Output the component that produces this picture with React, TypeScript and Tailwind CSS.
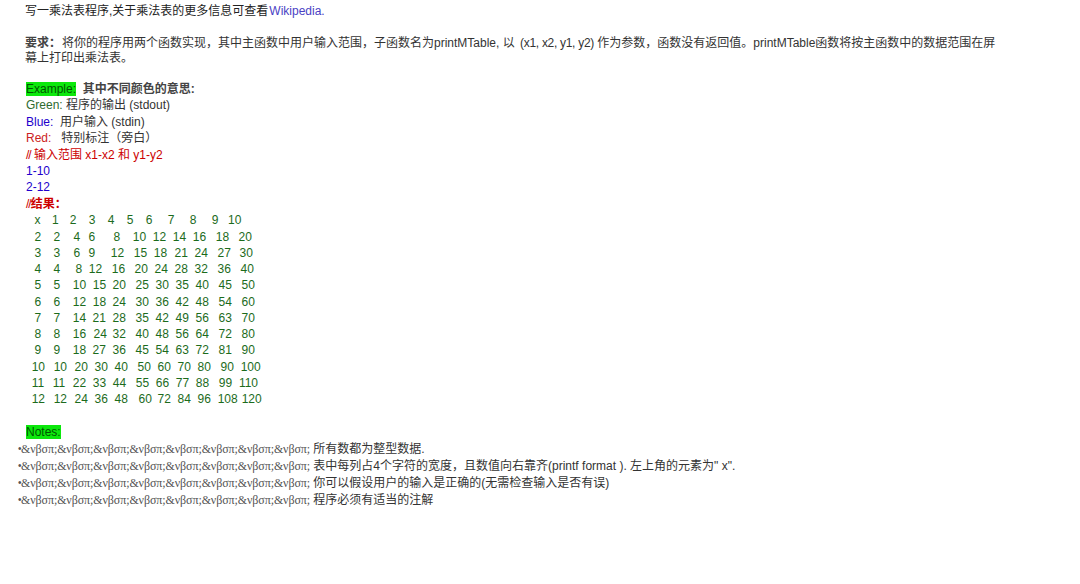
import React from "react"

const sans = "font-['Liberation_Sans','Noto_Sans_CJK_SC',sans-serif]"
const DIGIT = 6.674

// token, left edge of the glyph in px (the table in the page is only aligned with spaces)
const table: [string, number][][] = [
  [["x", 35], ["1", 54], ["2", 71], ["3", 90], ["4", 109], ["5", 128], ["6", 147], ["7", 169], ["8", 191], ["9", 213], ["10", 230]],
  [["2", 35], ["2", 54], ["4", 74], ["6", 89], ["8", 114], ["10", 134], ["12", 154], ["14", 174], ["16", 194], ["18", 217], ["20", 239]],
  [["3", 35], ["3", 54], ["6", 74], ["9", 89], ["12", 112], ["15", 135], ["18", 155], ["21", 175], ["24", 195], ["27", 218], ["30", 240]],
  [["4", 35], ["4", 54], ["8", 76], ["12", 90], ["16", 113], ["20", 135], ["24", 155], ["28", 175], ["32", 195], ["36", 218], ["40", 241]],
  [["5", 35], ["5", 54], ["10", 74], ["15", 94], ["20", 113], ["25", 136], ["30", 156], ["35", 176], ["40", 196], ["45", 219], ["50", 242]],
  [["6", 35], ["6", 54], ["12", 74], ["18", 94], ["24", 113], ["30", 136], ["36", 156], ["42", 176], ["48", 196], ["54", 219], ["60", 242]],
  [["7", 35], ["7", 54], ["14", 74], ["21", 93], ["28", 113], ["35", 136], ["42", 156], ["49", 176], ["56", 196], ["63", 219], ["70", 242]],
  [["8", 35], ["8", 54], ["16", 74], ["24", 94], ["32", 113], ["40", 136], ["48", 156], ["56", 176], ["64", 196], ["72", 219], ["80", 242]],
  [["9", 35], ["9", 54], ["18", 74], ["27", 93], ["36", 113], ["45", 136], ["54", 156], ["63", 176], ["72", 196], ["81", 219], ["90", 242]],
  [["10", 33], ["10", 55], ["20", 75], ["30", 95], ["40", 115], ["50", 138], ["60", 158], ["70", 178], ["80", 198], ["90", 221], ["100", 242]],
  [["11", 33], ["11", 55], ["22", 75], ["33", 95], ["44", 115], ["55", 138], ["66", 158], ["77", 178], ["88", 198], ["99", 221], ["110", 242]],
  [["12", 33], ["12", 55], ["24", 75], ["36", 95], ["48", 115], ["60", 139], ["72", 158], ["84", 178], ["96", 198], ["108", 219], ["120", 243]],
]

const TableRow = ({ row }: { row: [string, number][] }) => {
  let cursor = 26
  return (
    <p className="flex pl-[26px]">
      {row.map(([token, left], i) => {
        // digit 1 has a wider side bearing than the others
        const origin = left - (token[0] === "1" ? 1.3 : 0.5)
        const gap = origin - cursor
        cursor = origin + token.length * DIGIT
        return (
          <span key={i} style={{ marginLeft: gap }}>
            {token}
          </span>
        )
      })}
    </p>
  )
}

const notes = [
  "所有数都为整型数据.",
  "表中每列占4个字符的宽度，且数值向右靠齐(printf format ). 左上角的元素为\" x\".",
  "你可以假设用户的输入是正确的(无需检查输入是否有误)",
  "程序必须有适当的注解",
]

const Highlight = ({ children }: { children: React.ReactNode }) => (
  <span className="bg-[#0ce80c] text-[#005500]">{children}</span>
)

const App = () => {
  return (
    <div className={`${sans} h-[584px] w-[1080px] bg-white text-[12px] text-[#333]`}>
      <div className="pl-[25px] pt-[3px]">
        <p className="leading-[16px] text-[#222]">
          写一乘法表程序,关于乘法表的更多信息可查看<a className="ml-[1px] text-[#4a3fc4]">Wikipedia.</a>
        </p>

        <p className="mt-[17px] w-[976px] leading-[15px]">
          <b className="mr-[1px] text-[#444]">要求：</b>将你的程序用两个函数实现，其中主函数中用户输入范围，子函数名为printMTable, 以 <span className="ml-[2px] tracking-[-0.3px]">(x1, x2, y1, y2)</span> 作为参数，函数没有返回值。printMTable函数将按主函数中的数据范围在屏幕上打印出乘法表。
        </p>

        <div className="mt-[15px] pl-[1px] leading-[16.4px]">
          <p className="whitespace-pre">
            <Highlight>Example:</Highlight>  <b className="text-[#444]">其中不同颜色的意思:</b>
          </p>
          <p>
            <span className="text-[#2e6b2e]">Green:</span> 程序的输出 (stdout)
          </p>
          <p>
            <span className="text-[#2200cc]">Blue:</span>&nbsp; 用户输入 (stdin)
          </p>
          <p>
            <span className="text-[#cc2222]">Red:</span>&nbsp;&nbsp; 特别标注（旁白）
          </p>
          <p className="text-[#cc0000]">
            <span className="tracking-[-1px]">//</span> 输入范围 x1-x2 和 y1-y2
          </p>
          <p className="text-[#2200cc]">1-10</p>
          <p className="text-[#2200cc]">2-12</p>
          <p className="text-[#cc0000]">
            <span className="tracking-[-1px]">//</span>
            <b>结果：</b>
          </p>
        </div>

        <div className="-ml-[25px] whitespace-pre leading-[16.27px] text-[#1c6b1c]">
          {table.map((row, i) => (
            <TableRow key={i} row={row} />
          ))}
        </div>

        <p className="mt-[17px] pl-[1px] leading-[16px]">
          <Highlight>Notes:</Highlight>
        </p>
      </div>

      <ul className="pl-[18px]">
        {notes.map((note, i) => (
          <li key={i} className="flex h-[17px] items-center whitespace-pre">
            <span className="w-[3px] text-[10px] text-[#555]">•</span>
            <span className="font-['Liberation_Serif',serif] tracking-[-0.1px] text-[#555]">{"&νβσπ;".repeat(8)}</span>
            <span> {note}</span>
          </li>
        ))}
      </ul>
    </div>
  )
}

export default App
